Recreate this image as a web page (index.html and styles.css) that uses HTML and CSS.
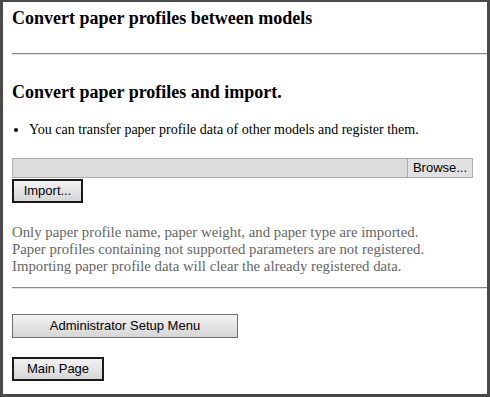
FILE: index.html
```html
<!DOCTYPE html>
<html>
<head>
<meta charset="utf-8">
<link rel="stylesheet" href="styles.css">
</head>
<body>
<div class="frame">
  <h1 class="title">Convert paper profiles between models</h1>
  <hr class="rule rule-top">
  <h2 class="subtitle">Convert paper profiles and import.</h2>
  <ul class="bullets">
    <li>You can transfer paper profile data of other models and register them.</li>
  </ul>
  <div class="file-row">
    <div class="file-field"></div>
    <button class="btn browse">Browse...</button>
  </div>
  <button class="btn btn-default import">Import...</button>
  <p class="notes">Only paper profile name, paper weight, and paper type are imported.<br>Paper profiles containing not supported parameters are not registered.<br>Importing paper profile data will clear the already registered data.</p>
  <hr class="rule rule-bottom">
  <button class="btn admin">Administrator Setup Menu</button>
  <button class="btn btn-default main">Main Page</button>
</div>
</body>
</html>
```
FILE: styles.css
```css
html, body {
  margin: 0;
  padding: 0;
  background: #fff;
}
.frame {
  box-sizing: border-box;
  width: 490px;
  height: 397px;
  border-style: solid;
  border-color: #4a4a4a;
  border-width: 2px 3px 3px 3px;
  padding: 0 0 0 9px;
  font-family: "Liberation Serif", "Times New Roman", serif;
  color: #000;
  display: flex;
  flex-direction: column;
  align-items: flex-start;
}
.title {
  margin: 6px 0 0 0;
  font-size: 18px;
  font-weight: bold;
  line-height: 20px;
}
.rule {
  align-self: stretch;
  margin: 0;
  border: none;
  border-top: 1px solid #888;
  border-bottom: 1px solid #e4e4e4;
  height: 0;
}
.rule-top {
  margin-top: 25px;
}
.subtitle {
  margin: 26px 0 0 0;
  font-size: 18px;
  font-weight: bold;
  line-height: 22px;
}
.bullets {
  margin: 18px 0 0 0;
  padding: 0 0 0 17px;
  font-size: 14px;
  line-height: 18px;
}
.file-row {
  margin-top: 19px;
  display: flex;
  width: 461px;
  height: 20px;
}
.file-field {
  flex: 1;
  background: #dcdcdc;
  border: 1px solid #ababab;
  border-right: none;
}
.btn {
  font-family: "Liberation Sans", Arial, sans-serif;
  font-size: 13px;
  color: #000;
  background: linear-gradient(#f2f2f2, #d6d6d6);
  border: 1px solid #707070;
  padding: 0;
  margin: 0;
  line-height: 16px;
}
.browse {
  width: 66px;
  height: 20px;
  background: #e1e1e1;
  border-color: #adadad;
}
.btn-default {
  border: 2px solid #1a1a1a;
}
.import {
  margin-top: 1px;
  width: 71px;
  height: 24px;
}
.notes {
  margin: 21px 0 0 0;
  font-size: 14.8px;
  line-height: 17px;
  color: #666;
}
.rule-bottom {
  margin-top: 12px;
}
.admin {
  margin-top: 25px;
  width: 226px;
  height: 24px;
}
.main {
  margin-top: 19px;
  width: 92px;
  height: 24px;
}
```
